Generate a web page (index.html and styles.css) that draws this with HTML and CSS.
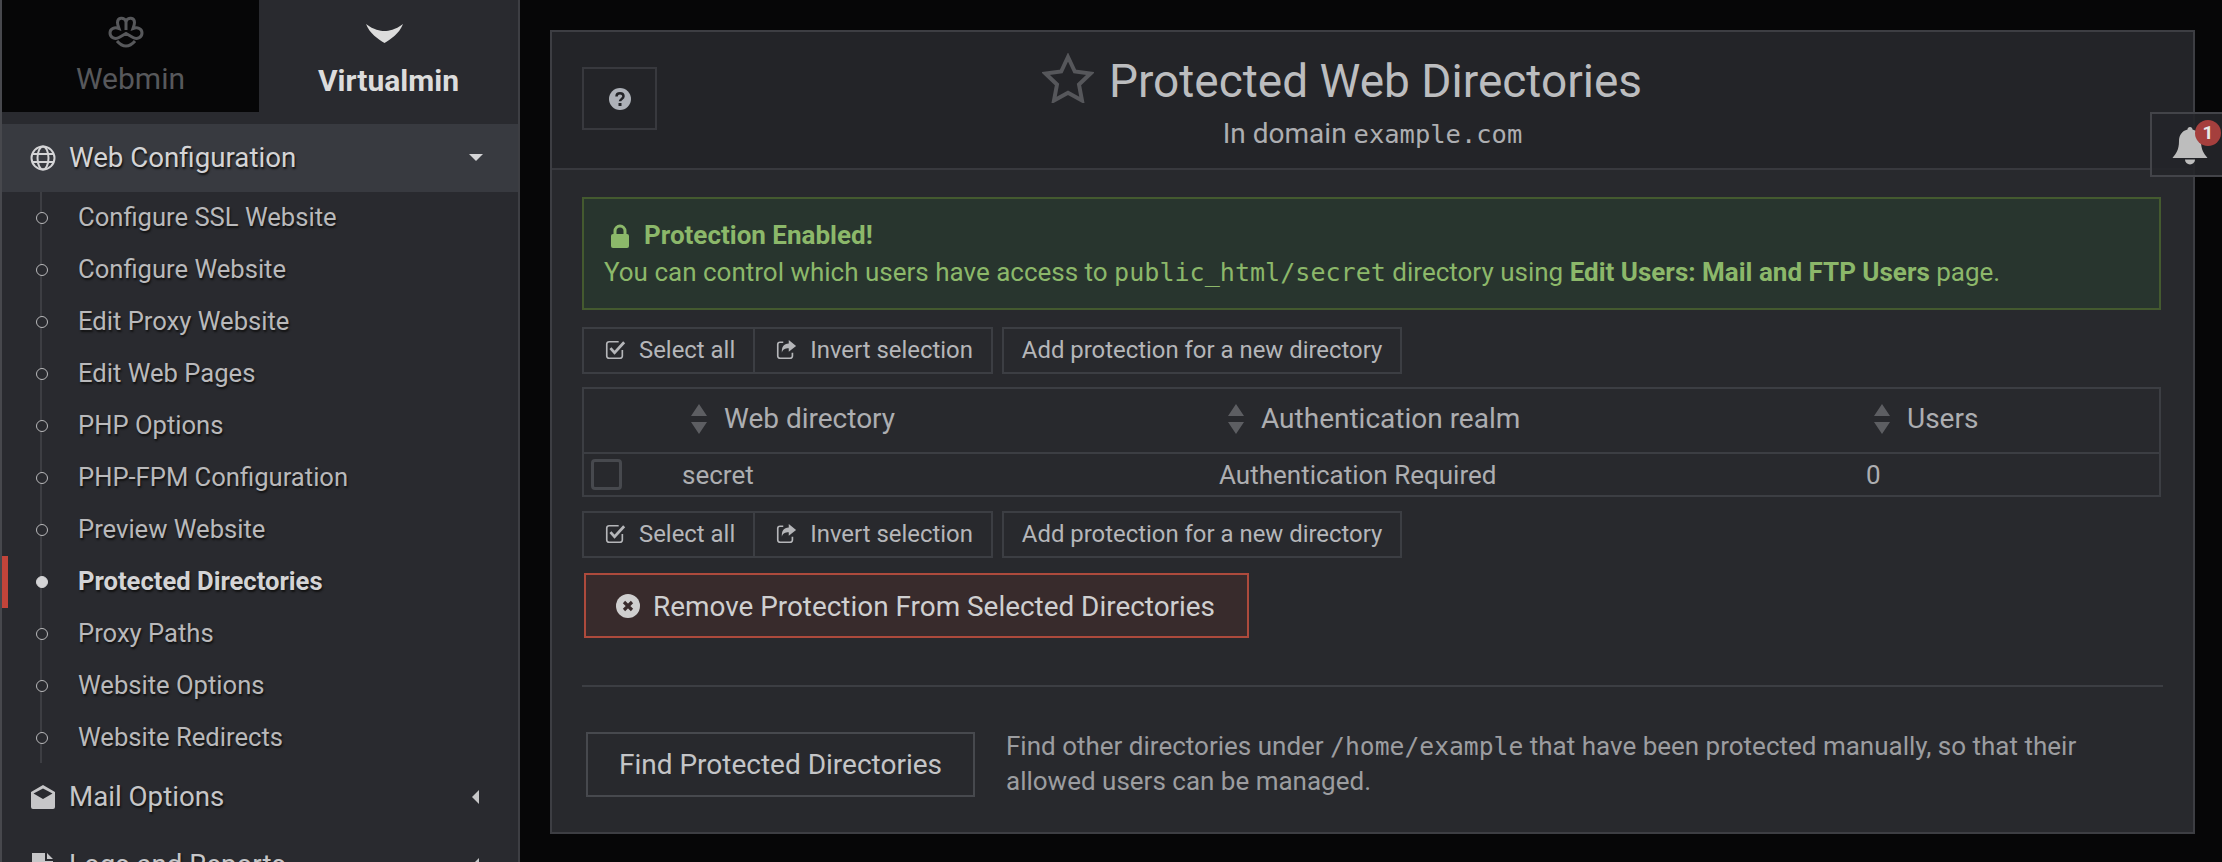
FILE: index.html
```html
<!DOCTYPE html>
<html lang="en">
<head>
  <meta charset="UTF-8">
  <title>Protected Web Directories</title>
  <link rel="stylesheet" href="styles.css">
</head>
<body>
  <svg class="defs" width="0" height="0">
    <symbol id="i-check" viewBox="0 0 24 24">
      <path d="M7 3h9M20 12v6.500a2.500 2.500 0 0 1-2.500 2.500h-12A2.500 2.500 0 0 1 3 18.500v-13A2.500 2.500 0 0 1 5.500 3H7" fill="none" stroke="currentColor" stroke-width="1.800"/>
      <path d="M7 10l4.500 5L22 3.500" fill="none" stroke="currentColor" stroke-width="3"/>
    </symbol>
    <symbol id="i-share" viewBox="0 0 24 24">
      <path d="M9 3.500H5.500A2.500 2.500 0 0 0 3 6v12.500A2.500 2.500 0 0 0 5.500 21h11a2.500 2.500 0 0 0 2.500-2.500V15" fill="none" stroke="currentColor" stroke-width="1.800"/>
      <path d="M15 1l8 6.500-8 6.500v-4c-4 0-6.500 1-7.500 5C7 9 9.500 5 15 5z" fill="currentColor"/>
    </symbol>
    <symbol id="i-sort" viewBox="0 0 18 30">
      <path d="M9 0l8 12H1zM9 30L1 18h16z" fill="currentColor"/>
    </symbol>
  </svg>

  <aside class="sidebar">
    <div class="tabs">
      <div class="tab tab-off">
        <svg class="tab-logo" width="36" height="32" viewBox="0 0 36 32">
          <path d="M18 5C16 1 9.500 1 9.500 6.500c0 2 .8 4 1.500 6-4-1.500-9-.5-9 4.500 0 5 5.500 6.500 9 4.500l7-4 7 4c3.500 2 9 .5 9-4.500 0-5-5-6-9-4.500.7-2 1.500-4 1.500-6C26.500 1 20 1 18 5z" fill="none" stroke="currentColor" stroke-width="3"/>
          <path d="M18 5v9M9 25c3 3.500 6 5 9 5s6-1.500 9-5" fill="none" stroke="currentColor" stroke-width="3"/>
        </svg>
        <span>Webmin</span>
      </div>
      <div class="tab tab-on">
        <svg class="tab-logo" width="37" height="19" viewBox="0 0 37 19">
          <path d="M0 0c8 6 14 7 18.500 7S29 6 37 0c-4 10-12 15-18.500 19C12 15 4 10 0 0z" fill="currentColor"/>
        </svg>
        <span>Virtualmin</span>
      </div>
    </div>

    <div class="menu-head menu-open">
      <svg class="menu-icon" viewBox="0 0 26 26">
        <g fill="none" stroke="currentColor" stroke-width="2">
          <circle cx="13" cy="13" r="11.500"/>
          <ellipse cx="13" cy="13" rx="5.500" ry="11.500"/>
          <path d="M2 9h22M2 17h22"/>
        </g>
      </svg>
      <span class="menu-label">Web Configuration</span>
      <i class="caret-down"></i>
    </div>
    <ul class="submenu">
      <li>Configure SSL Website</li>
      <li>Configure Website</li>
      <li>Edit Proxy Website</li>
      <li>Edit Web Pages</li>
      <li>PHP Options</li>
      <li>PHP-FPM Configuration</li>
      <li>Preview Website</li>
      <li class="active">Protected Directories</li>
      <li>Proxy Paths</li>
      <li>Website Options</li>
      <li>Website Redirects</li>
    </ul>
    <div class="menu-head">
      <svg class="menu-icon" viewBox="0 0 26 26">
        <path d="M13 1L1 8v15a2 2 0 0 0 2 2h20a2 2 0 0 0 2-2V8zM3.500 9.500L13 4.500l9.500 5L13 15z" fill="currentColor" fill-rule="evenodd"/>
      </svg>
      <span class="menu-label">Mail Options</span>
      <i class="caret-left"></i>
    </div>
    <div class="menu-head">
      <svg class="menu-icon" viewBox="0 0 26 26">
        <path d="M2 1h13v8h8v16H2zM17 1l6 6h-6z" fill="currentColor"/>
      </svg>
      <span class="menu-label">Logs and Reports</span>
      <i class="caret-left"></i>
    </div>
  </aside>

  <main class="content">
    <section class="panel">
      <header class="panel-head">
        <button class="btn-help">
          <svg width="22" height="22" viewBox="0 0 22 22">
            <circle cx="11" cy="11" r="11" fill="#adb1b8"/>
            <path d="M7.500 8.500c0-2 1.500-3.200 3.500-3.200s3.500 1.200 3.500 3c0 2.700-3.500 2.500-3.500 5" fill="none" stroke="#232428" stroke-width="2.500"/>
            <rect x="9.500" y="15" width="3" height="3" fill="#232428"/>
          </svg>
        </button>
        <div class="panel-title">
          <h1>
            <svg class="star" width="52" height="50" viewBox="0 0 52 50">
              <path d="M26 4l6.800 14.500 15.700 2L37 31.500 40 47.500 26 39.800 12 47.500l3-16L3.500 20.500l15.700-2z" fill="none" stroke="#56575b" stroke-width="4"/>
            </svg>
            <span>Protected Web Directories</span>
          </h1>
          <p class="subtitle">In domain <code>example.com</code></p>
        </div>
      </header>

      <div class="panel-body">
        <div class="alert">
          <div class="alert-title">
            <svg width="18" height="24" viewBox="0 0 18 24">
              <path d="M4 11V7a5 5 0 0 1 10 0v4" fill="none" stroke="currentColor" stroke-width="3"/>
              <rect y="10" width="18" height="14" rx="2" fill="currentColor"/>
            </svg>
            <strong>Protection Enabled!</strong>
          </div>
          <div>You can control which users have access to <code>public_html/secret</code> directory using <strong>Edit Users: Mail and FTP Users</strong> page.</div>
        </div>

        <div class="btn-row">
          <div class="btn-group">
            <button class="btn"><svg class="btn-icon"><use href="#i-check"/></svg>Select all</button>
            <button class="btn"><svg class="btn-icon"><use href="#i-share"/></svg>Invert selection</button>
          </div>
          <button class="btn">Add protection for a new directory</button>
        </div>

        <table class="dir-table">
          <colgroup>
            <col class="col-check"><col class="col-dir"><col class="col-realm"><col>
          </colgroup>
          <thead>
            <tr>
              <th></th>
              <th><svg class="sort"><use href="#i-sort"/></svg>Web directory</th>
              <th><svg class="sort"><use href="#i-sort"/></svg>Authentication realm</th>
              <th><svg class="sort"><use href="#i-sort"/></svg>Users</th>
            </tr>
          </thead>
          <tbody>
            <tr>
              <td class="check-cell"><span class="checkbox"></span></td>
              <td>secret</td>
              <td>Authentication Required</td>
              <td>0</td>
            </tr>
          </tbody>
        </table>

        <div class="btn-row">
          <div class="btn-group">
            <button class="btn"><svg class="btn-icon"><use href="#i-check"/></svg>Select all</button>
            <button class="btn"><svg class="btn-icon"><use href="#i-share"/></svg>Invert selection</button>
          </div>
          <button class="btn">Add protection for a new directory</button>
        </div>

        <button class="btn-danger">
          <svg width="24" height="24" viewBox="0 0 24 24">
            <circle cx="12" cy="12" r="12" fill="#cfcfcf"/>
            <path d="M8 8l8 8M16 8l-8 8" stroke="#382b2c" stroke-width="3.200"/>
          </svg>
          Remove Protection From Selected Directories
        </button>

        <hr class="rule">

        <div class="find-row">
          <button class="btn-find">Find Protected Directories</button>
          <p>Find other directories under <code>/home/example</code> that have been protected manually, so that their allowed users can be managed.</p>
        </div>
      </div>
    </section>
  </main>

  <div class="notify">
    <svg width="36" height="38" viewBox="0 0 36 38">
      <path d="M18 0c1.500 0 2.500 1 2.500 2.600C26 4 29 8.500 29 14c0 9 3 12.500 6.500 17H.5C4 26.500 7 23 7 14c0-5.500 3-10 8.500-11.400C15.500 1 16.500 0 18 0z" fill="#bdbdbd"/>
      <path d="M13 32.500h10a5 5 0 0 1-10 0z" fill="#bdbdbd"/>
    </svg>
    <span class="badge">1</span>
  </div>
</body>
</html>
```

FILE: styles.css
```css
* {
  box-sizing: border-box;
}
html, body {
  height: 862px;
  overflow: hidden;
}
body {
  margin: 0;
  display: flex;
  background: #060607;
  font-family: Roboto, "Liberation Sans", sans-serif;
  color: #adaeb1;
}
code {
  font-family: "DejaVu Sans Mono", "Liberation Mono", monospace;
  font-size: 0.965em;
}
.defs {
  position: absolute;
}

/* sidebar */
.sidebar {
  width: 520px;
  height: 862px;
  flex: none;
  overflow: hidden;
  background: #292a2f;
  border-left: 2px solid #47484d;
  border-right: 2px solid #3d3e43;
}
.tabs {
  display: flex;
  height: 112px;
  margin-bottom: 12px;
}
.tab {
  flex: 1;
  height: 112px;
  display: flex;
  flex-direction: column;
  align-items: center;
  font-size: 30px;
}
.tab-logo {
  flex: none;
}
.tab-off {
  flex: none;
  width: 257px;
  background: #060607;
  color: #57585b;
  padding-top: 16px;
  gap: 13px;
}
.tab-off .tab-logo {
  margin-right: 10px;
}
.tab-on {
  color: #dcdcdc;
  font-weight: 700;
  padding-top: 24px;
  gap: 20px;
}
.tab-on .tab-logo {
  margin-right: 8px;
}
.menu-head {
  display: flex;
  align-items: center;
  height: 68px;
  padding: 0 0 1px 28px;
  font-size: 27.700px;
  color: #c6c6c8;
  text-shadow: 1px 2px 2px #111;
}
.menu-open {
  background: #383a40;
  color: #d4d4d6;
}
.menu-icon {
  width: 26px;
  height: 26px;
  margin-right: 13px;
  flex: none;
}
.menu-label {
  flex: 1;
}
.caret-down {
  width: 0;
  height: 0;
  margin-right: 35px;
  border-left: 7px solid transparent;
  border-right: 7px solid transparent;
  border-top: 7px solid currentColor;
}
.caret-left {
  width: 0;
  height: 0;
  margin-right: 39px;
  border-top: 7px solid transparent;
  border-bottom: 7px solid transparent;
  border-right: 7px solid currentColor;
}
.submenu {
  list-style: none;
  margin: 0;
  padding: 0;
  height: 571px;
  position: relative;
}
.submenu::before {
  content: "";
  position: absolute;
  left: 38px;
  top: 0;
  height: 571px;
  width: 2px;
  background: #3d3e43;
}
.submenu li {
  height: 52px;
  line-height: 50px;
  padding-left: 76px;
  font-size: 25.600px;
  color: #b9b9bb;
  text-shadow: 1px 2px 2px #111;
  position: relative;
}
.submenu li::before {
  content: "";
  position: absolute;
  left: 34px;
  top: 20px;
  width: 10px;
  height: 10px;
  border-radius: 50%;
  border: 1.500px solid #b9b9bb;
  background: #292a2f;
}
.submenu li.active {
  font-weight: 700;
  color: #d4d4d6;
}
.submenu li.active::before {
  background: #d4d4d6;
  border-color: #d4d4d6;
}
.submenu li.active::after {
  content: "";
  position: absolute;
  left: -2px;
  top: 0;
  width: 8px;
  height: 52px;
  background: #c2443a;
}

/* main panel */
.content {
  flex: 1;
  padding: 30px 27px 28px 30px;
}
.panel {
  height: 804px;
  border: 2px solid #3d3e43;
  background: #28292d;
}
.panel-head {
  position: relative;
  height: 138px;
  background: #232428;
  border-bottom: 2px solid #38393e;
  display: flex;
  justify-content: center;
}
.btn-help {
  position: absolute;
  left: 30px;
  top: 35px;
  width: 75px;
  height: 63px;
  background: transparent;
  border: 2px solid #38393e;
  padding: 0;
  display: flex;
  align-items: center;
  justify-content: center;
}
.panel-title {
  text-align: center;
  padding-top: 22px;
}
.panel-title h1 {
  margin: 0;
  padding-left: 6px;
  font-size: 46px;
  line-height: 54px;
  font-weight: 400;
  color: #bcbdbf;
  display: flex;
  align-items: center;
  justify-content: center;
  gap: 15px;
}
.star {
  margin: -7px 0 0 -67px;
}
.subtitle {
  margin: 9px 0 0;
  font-size: 28px;
  line-height: 34px;
  color: #adaeb1;
}
.subtitle code {
  font-size: 0.91em;
}
.panel-body {
  padding: 27px 32px 0 30px;
}
.alert {
  height: 113px;
  padding: 18px 20px 0;
  background: #28352e;
  border: 2px solid #445a2f;
  color: #8cb86a;
  font-size: 26px;
  line-height: 37px;
}
.alert-title {
  display: flex;
  align-items: center;
  gap: 15px;
  padding-left: 7px;
}
.btn-row {
  display: flex;
  gap: 9px;
  margin-top: 17px;
}
.btn-group {
  display: flex;
}
.btn-group .btn + .btn {
  margin-left: -2px;
}
.btn {
  height: 47px;
  padding: 0 18px 2px;
  background: transparent;
  border: 2px solid #3c3e43;
  color: #b5b6b9;
  font-family: inherit;
  font-size: 23.900px;
  display: flex;
  align-items: center;
}
.btn-icon {
  width: 22px;
  height: 22px;
  margin: 0 13px 0 2px;
}
.dir-table {
  width: 100%;
  margin-top: 13px;
  table-layout: fixed;
  border-collapse: collapse;
  border: 2px solid #3c3e43;
  font-size: 26px;
}
.col-check {
  width: 90px;
}
.col-dir {
  width: 537px;
}
.col-realm {
  width: 647px;
}
.dir-table th {
  height: 65px;
  padding: 0 0 5px 17px;
  text-align: left;
  font-weight: 400;
  font-size: 28px;
  border-bottom: 2px solid #3c3e43;
}
.dir-table th:last-child {
  padding-left: 16px;
}
.dir-table td {
  height: 43px;
  padding: 1px 0 0 9px;
}
.sort {
  width: 18px;
  height: 30px;
  margin-right: 16px;
  vertical-align: -6px;
  color: #5d5e62;
}
.check-cell {
  line-height: 0;
}
.dir-table td.check-cell {
  padding: 0 0 0 7px;
}
.checkbox {
  display: inline-block;
  width: 31px;
  height: 31px;
  border: 3px solid #47494e;
  border-radius: 4px;
}
.dir-table + .btn-row {
  margin-top: 14px;
}
.btn-danger {
  display: flex;
  align-items: center;
  gap: 14px;
  height: 65px;
  margin: 15px 0 0 2px;
  padding: 1px 32px 0 30px;
  background: #382b2c;
  border: 2px solid #ad4a3c;
  color: #cfcfd0;
  font-family: inherit;
  font-size: 27.900px;
}
.btn-danger svg {
  margin-right: -1px;
}
.rule {
  margin: 47px -2px 0 0;
  border: 0;
  border-top: 2px solid #3c3e43;
}
.find-row {
  display: flex;
  align-items: center;
  margin: 42px 0 0 4px;
  gap: 31px;
}
.find-row p {
  margin: 0;
  flex: 1;
  font-size: 26px;
  line-height: 35px;
  color: #9c9da0;
}
.find-row code {
  font-size: 0.95em;
}
.btn-find {
  flex: none;
  width: 389px;
  height: 65px;
  background: transparent;
  border: 2px solid #47494e;
  color: #c4c5c7;
  font-family: inherit;
  font-size: 28px;
  padding: 0;
}

/* notification tab over the panel edge */
.notify {
  position: absolute;
  left: 2150px;
  top: 112px;
  width: 72px;
  height: 65px;
  background: rgba(36, 37, 41, 0.92);
  border: 2px solid #434449;
  border-right: 0;
  padding: 13px 0 0 20px;
}
.badge {
  position: absolute;
  left: 43px;
  top: 6px;
  width: 26px;
  height: 26px;
  border-radius: 50%;
  background: #a53f3d;
  color: #e8e8e8;
  font-size: 19px;
  font-weight: 700;
  line-height: 26px;
  text-align: center;
}
```
